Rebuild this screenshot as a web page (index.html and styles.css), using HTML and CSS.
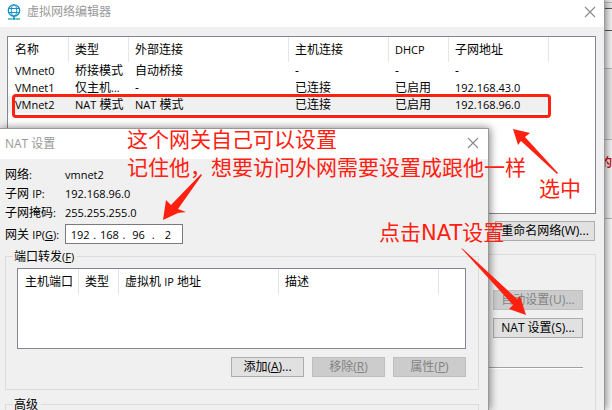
FILE: index.html
```html
<!DOCTYPE html>
<html lang="zh-CN">
<head>
    <meta charset="UTF-8">
    <meta name="viewport" content="width=device-width, initial-scale=1.0">
    <title>虚拟网络编辑器</title>
    <link rel="stylesheet" href="styles.css">
</head>
<body>
    <div class="desktop">
        <!-- window behind the editor -->
        <div class="backdrop">
            <div class="strip strip-top"></div>
            <div class="strip strip-tab"></div>
            <div class="strip strip-bar"></div>
            <div class="strip strip-tools"></div>
            <div class="strip strip-head"></div>
            <div class="strip strip-text">的</div>
            <div class="strip strip-rest"></div>
        </div>

        <div class="window editor">
            <div class="title-bar">
                <svg class="app-icon" width="14" height="16" viewBox="0 0 14 16" fill="none" stroke="#1592c4">
                    <circle cx="7" cy="6.5" r="5.7" stroke-width="1.3"/>
                    <ellipse cx="7" cy="6.5" rx="2.7" ry="5.7"/>
                    <path d="M1.5 4.5h11M1.5 8.5h11"/>
                    <path d="M7 12v2.5" stroke-width="1.5"/>
                    <path d="M1 15h4M9 15h4" stroke="#35b59a" stroke-width="1.3"/>
                    <path d="M5.5 14.8h3" stroke-width="2"/>
                </svg>
                <span class="title">虚拟网络编辑器</span>
                <button class="close" aria-label="关闭">
                    <svg width="12" height="12" viewBox="0 0 12 12" stroke="#8a8a8a" stroke-width="1.1"><path d="M1 1l10 10M11 1L1 11"/></svg>
                </button>
            </div>
            <div class="editor-body">
                <div class="list network-list">
                    <table>
                        <colgroup>
                            <col class="w61"><col class="w60"><col class="w160"><col class="w100"><col class="w60"><col class="w100"><col>
                        </colgroup>
                        <thead>
                            <tr><th>名称</th><th>类型</th><th>外部连接</th><th>主机连接</th><th><span class="en">DHCP</span></th><th>子网地址</th><th></th></tr>
                        </thead>
                        <tbody>
                            <tr><td><span class="en">VMnet0</span></td><td>桥接模式</td><td>自动桥接</td><td>-</td><td>-</td><td>-</td><td></td></tr>
                            <tr><td><span class="en">VMnet1</span></td><td>仅主机<span class="en">...</span></td><td>-</td><td>已连接</td><td>已启用</td><td><span class="en">192.168.43.0</span></td><td></td></tr>
                            <tr class="selected"><td><span class="en">VMnet2</span></td><td><span class="en">NAT</span> 模式</td><td><span class="en">NAT</span> 模式</td><td>已连接</td><td>已启用</td><td><span class="en">192.168.96.0</span></td><td></td></tr>
                        </tbody>
                    </table>
                </div>
                <button class="btn rename">重命名网络(W)...</button>
                <div class="vmnet-info">
                    <button class="btn" disabled>自动设置(U)...</button>
                    <button class="btn">NAT 设置(S)...</button>
                    <hr>
                </div>
            </div>
        </div>

        <div class="window nat">
            <div class="title-bar">
                <span class="title">NAT 设置</span>
                <button class="close" aria-label="关闭">
                    <svg width="12" height="12" viewBox="0 0 12 12" stroke="#8a8a8a" stroke-width="1.1"><path d="M1 1l10 10M11 1L1 11"/></svg>
                </button>
            </div>
            <div class="nat-body">
                <dl class="info">
                    <dt>网络<span class="en">:</span></dt><dd>vmnet2</dd>
                    <dt>子网 <span class="en">IP:</span></dt><dd>192.168.96.0</dd>
                    <dt>子网掩码<span class="en">:</span></dt><dd>255.255.255.0</dd>
                </dl>
                <div class="gateway">
                    <label for="ip1">网关 <span class="en">IP(<u>G</u>):</span></label>
                    <div class="ip">
                        <input type="text" id="ip1" value="192"><span>.</span>
                        <input type="text" aria-label="网关 IP 第二段" value="168"><span>.</span>
                        <input type="text" aria-label="网关 IP 第三段" value="96"><span>.</span>
                        <input type="text" aria-label="网关 IP 第四段" value="2">
                    </div>
                </div>
                <fieldset class="forward">
                    <legend>端口转发<span class="en">(<u>F</u>)</span></legend>
                    <div class="list port-list">
                        <table>
                            <colgroup><col class="w61"><col class="w40"><col class="w160"><col class="w160"><col></colgroup>
                            <thead>
                                <tr><th>主机端口</th><th>类型</th><th>虚拟机 <span class="en">IP</span> 地址</th><th>描述</th><th></th></tr>
                            </thead>
                        </table>
                    </div>
                    <div class="buttons">
                        <button class="btn">添加(<u>A</u>)...</button>
                        <button class="btn" disabled>移除(<u>R</u>)</button>
                        <button class="btn" disabled>属性(<u>P</u>)</button>
                    </div>
                </fieldset>
                <fieldset class="advanced">
                    <legend>高级</legend>
                </fieldset>
            </div>
        </div>

        <!-- red notes on top of everything -->
        <div class="frame"></div>
        <p class="note note-gateway">这个网关自己可以设置<br>记住他，想要访问外网需要设置成跟他一样</p>
        <p class="note note-select">选中</p>
        <p class="note note-click">点击NAT设置</p>
        <svg class="arrows" width="612" height="410" viewBox="0 0 612 410" fill="#ff2010">
            <path d="M201 174L202 175L178 209L186 212L178 213L163 220L166 200L171 205Z"/>
            <path d="M513 129L530 133L525 137L558 173L557 174L521 141L518 145Z"/>
            <path d="M461 248L463 249L517 299L520 296L526 315L509 309L513 305Z"/>
        </svg>
    </div>
</body>
</html>
```
FILE: styles.css
```css
* {
    box-sizing: border-box;
}

body {
    margin: 0;
    font-family: "Open Sans", "Noto Sans CJK SC", sans-serif;
    font-size: 12px;
    line-height: 17px;
    color: #000;
    overflow: hidden;
}

button, input {
    font: inherit;
    color: inherit;
}

.en {
    font-size: 11px;
}

.desktop {
    position: relative;
    height: 100vh;
    background-color: #e8e8e8;
    overflow: hidden;
}

/* window behind */
.backdrop {
    height: 100%;
    display: flex;
    flex-direction: column;
}

.strip {
    border-bottom: 1px solid #b8b8b8;
}

.strip-top {
    height: 3px;
}

.strip-tab {
    height: 6px;
    border-color: #555;
}

.strip-bar {
    height: 22px;
    border-color: #555;
    background-color: #f4f4f4;
}

.strip-tools {
    height: 38px;
    background-color: #f4f4f4;
}

.strip-head {
    height: 71px;
}

.strip-text {
    height: 79px;
    padding-top: 14px;
    text-align: right;
    font-weight: bold;
    color: #d01010;
    background-color: #f4f4f4;
}

.strip-rest {
    flex: 1;
    border: none;
    background-color: #fafafa;
}

/* windows */
.window {
    position: absolute;
    left: 0;
    bottom: 0;
    display: flex;
    flex-direction: column;
    background-color: #f0f0f0;
    box-shadow: 1px 0 8px rgba(0, 0, 0, 0.5);
}

.editor {
    top: 0;
    right: 7px;
    border-right: 1px solid #999;
}

.nat {
    top: 128px;
    width: 80%;
    max-width: 489px;
    border-top: 1px solid #999;
    border-right: 1px solid #999;
}

.title-bar {
    display: flex;
    align-items: center;
    background-color: #fff;
    color: #999;
}

.editor .title-bar {
    height: 27px;
    padding: 0 7px 4px 7px;
}

.nat .title-bar {
    height: 30px;
    padding: 0 8px 2px 5px;
}

.title {
    flex: 1;
}

.app-icon {
    margin-right: 6px;
}

.close {
    display: flex;
    padding: 1px;
    border: none;
    background: none;
}

.editor-body {
    flex: 1;
    display: flex;
    flex-direction: column;
    padding: 9px 8px 0 7px;
}

/* lists */
.list {
    background-color: #fff;
    border: 1px solid #828790;
}

.network-list {
    height: 178px;
}

.port-list {
    height: 81px;
}

table {
    width: 100%;
    table-layout: fixed;
    border-collapse: separate;
    border-spacing: 0;
}

.w40 { width: 40px; }
.w60 { width: 60px; }
.w61 { width: 61px; }
.w100 { width: 100px; }
.w160 { width: 160px; }

th, td {
    height: 17px;
    padding: 0 0 0 7px;
    line-height: 16px;
    font-weight: normal;
    text-align: left;
    white-space: nowrap;
}

th {
    height: 25px;
    border-right: 1px solid #e5e5e5;
}

th:last-child {
    border-right: none;
}

th:nth-child(n+2), td:nth-child(n+2) {
    padding-left: 6px;
}

.selected td:not(:last-child) {
    background-color: #f0f0f0;
}

/* buttons */
.btn {
    height: 20px;
    padding: 0;
    line-height: 16px;
    white-space: nowrap;
    background-color: #e1e1e1;
    border: 1px solid #adadad;
}

.btn:disabled {
    background-color: #ccc;
    border-color: #bfbfbf;
    color: #838383;
}

.rename {
    align-self: flex-end;
    width: 100px;
    margin: 7px 1px 0 0;
}

.vmnet-info {
    flex: 1;
    display: flex;
    flex-direction: column;
    align-items: flex-end;
    gap: 8px;
    margin-top: 13px;
    padding: 35px 12px 0;
    border: 1px solid #dcdcdc;
    border-bottom: none;
}

.vmnet-info .btn {
    width: 90px;
}

.vmnet-info hr {
    width: 100%;
    margin: 21px 0 0;
    border: none;
    border-top: 1px solid #a0a0a0;
    border-bottom: 1px solid #fff;
}

/* NAT dialog */
.nat-body {
    flex: 1;
    padding: 7px 9px 0 5px;
    overflow: hidden;
}

.info {
    display: grid;
    grid-template-columns: 60px 1fr;
    row-gap: 2px;
    margin: 0;
}

.info dd {
    margin: 0;
    font-size: 11px;
}

.gateway {
    display: flex;
    align-items: center;
    margin-top: 3px;
}

.gateway label {
    width: 60px;
    white-space: nowrap;
}

.ip {
    display: flex;
    align-items: center;
    width: 118px;
    height: 20px;
    padding: 0 1px;
    font-size: 11px;
    background-color: #fff;
    border: 1px solid #7a7a7a;
}

.ip input {
    flex: 1;
    min-width: 0;
    padding: 0;
    text-align: center;
    border: none;
    background: none;
}

fieldset {
    min-width: 0;
    margin: 0;
    padding: 0 12px 12px 11px;
    border: 1px solid #dcdcdc;
}

legend {
    margin-left: -4px;
    padding: 0 3px 0 1px;
}

.forward {
    margin-top: 4px;
}

.port-list {
    margin-top: 3px;
}

.buttons {
    display: flex;
    justify-content: flex-end;
    gap: 8px;
    margin-top: 8px;
}

.buttons .btn {
    width: 73px;
}

.advanced {
    height: 80px;
    margin-top: 6px;
}

/* notes */
.frame {
    position: absolute;
    top: 94px;
    left: 12px;
    width: 539px;
    height: 24px;
    border: 3px solid #ff2010;
    border-radius: 4px;
}

.note {
    position: absolute;
    margin: 0;
    font-family: "DejaVu Sans", "Noto Sans CJK SC", sans-serif;
    font-size: 21px;
    line-height: 28px;
    color: #ff2010;
    white-space: nowrap;
}

.note-gateway {
    top: 126px;
    left: 127px;
}

.note-select {
    top: 175px;
    left: 539px;
}

.note-click {
    top: 219px;
    left: 379px;
}

.arrows {
    position: absolute;
    top: 0;
    left: 0;
    pointer-events: none;
}
```
